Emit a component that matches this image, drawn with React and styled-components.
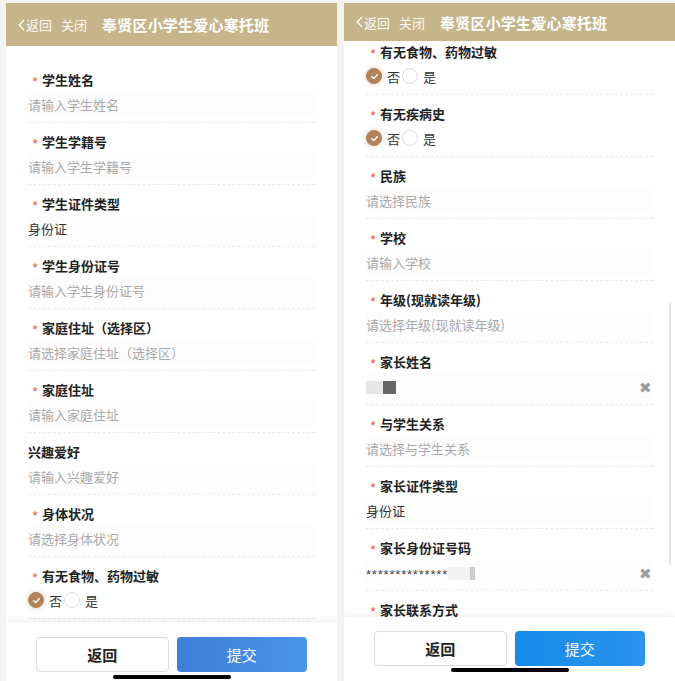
import React from 'react';
import styled, { createGlobalStyle } from 'styled-components';

const GlobalStyle = createGlobalStyle`
    html, body {
        margin: 0;
        padding: 0;
        background: #f3f3f3;
        font-family: "Noto Sans CJK SC", "Noto Sans", sans-serif;
    }
`

const Page = styled.div`
    display: flex;
    gap: 7px;
    padding: 3px 0 0 6px;
    width: 675px;
    height: 681px;
    box-sizing: border-box;
    overflow: hidden;
`

const Phone = styled.div`
    position: relative;
    width: 331px;
    height: 678px;
    background: #fff;
    display: flex;
    flex-direction: column;
    overflow: hidden;
    flex-shrink: 0;
`

const Header = styled.div`
    height: ${p => p.$h}px;
    flex-shrink: 0;
    background: #c6b58a;
    color: #fff;
    display: flex;
    align-items: center;
    padding-left: 12px;
    box-sizing: border-box;
`

const NavLink = styled.span`
    font-size: 13px;
    margin-right: 9px;
    display: flex;
    align-items: center;
    color: #fdfbf6;
`

const Title = styled.span`
    font-size: 15px;
    font-weight: 700;
    margin-left: 6px;
    letter-spacing: 0.2px;
`

const Body = styled.div`
    flex: 1;
    overflow: hidden;
    padding: 0 22px;
`

const List = styled.div`
    margin-top: ${p => p.$top}px;
`

const Field = styled.div`
    padding: 8px 0 5px;
    border-bottom: 1px dashed #e8e8e8;
`

const Label = styled.div`
    height: 20px;
    display: flex;
    align-items: center;
    font-size: 13px;
    font-weight: 700;
    color: #222;
`

const Star = styled.span`
    width: 14px;
    height: 20px;
    display: flex;
    align-items: center;
    justify-content: center;
    padding-top: 5px;
    box-sizing: border-box;
    color: #e8493f;
    font-family: "Liberation Sans", sans-serif;
    font-size: 13px;
    font-weight: 400;
`

const Input = styled.div`
    height: 26px;
    margin-top: 2px;
    display: flex;
    align-items: center;
    justify-content: space-between;
    font-size: 13px;
    color: ${p => (p.$filled ? '#333' : '#a9a9a9')};
    background: #fdfdfd;
`

const ClearIcon = styled.span`
    color: #9c9c9c;
    font-size: 15px;
    margin-right: 1px;
`

const Blur = styled.span`
    display: inline-block;
    width: ${p => p.$w}px;
    height: 13px;
    background: ${p => p.$c};
    vertical-align: middle;
`

const Masked = styled.span`
    font-family: "Liberation Sans", sans-serif;
    font-size: 13px;
    letter-spacing: 0.8px;
    color: #444;
    vertical-align: middle;
`

const RadioRow = styled.div`
    height: 26px;
    margin-top: 2px;
    display: flex;
    align-items: center;
    font-size: 13px;
    color: #333;
`

const Dot = styled.span`
    width: 16px;
    height: 16px;
    border-radius: 50%;
    box-sizing: border-box;
    display: flex;
    align-items: center;
    justify-content: center;
    margin-right: 5px;
    margin-left: ${p => (p.$on ? 0 : 2)}px;
    background: ${p => (p.$on ? '#b5835a' : '#fff')};
    border: 1px solid ${p => (p.$on ? '#b5835a' : '#ddd')};
    box-shadow: ${p => (p.$on ? '0 0 4px rgba(181,131,90,0.45)' : 'none')};
`

const Footer = styled.div`
    height: ${p => p.$h}px;
    flex-shrink: 0;
    padding-top: ${p => p.$pad}px;
    box-sizing: border-box;
    background: #fff;
    box-shadow: 0 -2px 6px rgba(0, 0, 0, 0.07);
    display: flex;
    flex-direction: column;
    align-items: center;
    position: relative;
`

const Buttons = styled.div`
    display: flex;
    gap: 8px;
    width: 100%;
    padding: 0 30px;
    box-sizing: border-box;
`

const Btn = styled.div`
    flex: 1;
    height: 35px;
    border-radius: 4px;
    display: flex;
    align-items: center;
    justify-content: center;
    font-size: 15px;
    box-sizing: border-box;
    ${p => p.$primary
        ? `background: ${p.$bg}; color: #fff;`
        : 'background: #fff; color: #222; font-weight: 700; border: 1px solid #ddd;'}
`

const HomeBar = styled.div`
    width: 118px;
    height: 4px;
    border-radius: 2px;
    background: #000;
    margin-top: ${p => p.$gap}px;
`

const ScrollThumb = styled.div`
    position: absolute;
    right: 4px;
    top: 300px;
    width: 2px;
    height: 262px;
    border-radius: 1px;
    background: #e3e3e3;
`

const Check = () => (
    <svg width="9" height="9" viewBox="0 0 10 10">
        <path d="M2 5.2 L4.2 7.3 L8 3" fill="none" stroke="#fff" strokeWidth="1.6" strokeLinecap="round" strokeLinejoin="round" />
    </svg>
)

const Chevron = () => (
    <svg width="7" height="12" viewBox="0 0 7 12" style={{ marginRight: 1 }}>
        <path d="M6 1 L1.2 6 L6 11" fill="none" stroke="#fff" strokeWidth="1.2" />
    </svg>
)

const leftFields = [
    { label: '学生姓名', text: '请输入学生姓名' },
    { label: '学生学籍号', text: '请输入学生学籍号' },
    { label: '学生证件类型', text: '身份证', filled: true },
    { label: '学生身份证号', text: '请输入学生身份证号' },
    { label: '家庭住址（选择区）', text: '请选择家庭住址（选择区）' },
    { label: '家庭住址', text: '请输入家庭住址' },
    { label: '兴趣爱好', text: '请输入兴趣爱好', optional: true },
    { label: '身体状况', text: '请选择身体状况' },
    { label: '有无食物、药物过敏', radio: true },
]

const rightFields = [
    { label: '有无食物、药物过敏', radio: true },
    { label: '有无疾病史', radio: true },
    { label: '民族', text: '请选择民族' },
    { label: '学校', text: '请输入学校' },
    { label: '年级(现就读年级)', text: '请选择年级(现就读年级)' },
    { label: '家长姓名', kind: 'name' },
    { label: '与学生关系', text: '请选择与学生关系' },
    { label: '家长证件类型', text: '身份证', filled: true },
    { label: '家长身份证号码', kind: 'id' },
    { label: '家长联系方式', text: '请输入家长联系方式' },
]

function FieldRow({ f }) {
    let control;
    if (f.radio) {
        control = (
            <RadioRow>
                <Dot $on><Check /></Dot>否
                <Dot />是
            </RadioRow>
        );
    } else if (f.kind === 'name') {
        control = (
            <Input $filled>
                <span><Blur $w={17} $c="#e6e6e6" /><Blur $w={13} $c="#666" /></span>
                <ClearIcon>✖</ClearIcon>
            </Input>
        );
    } else if (f.kind === 'id') {
        control = (
            <Input $filled>
                <span><Masked>**************</Masked><Blur $w={22} $c="#f2f2f2" /><Blur $w={5} $c="#ccc" /></span>
                <ClearIcon>✖</ClearIcon>
            </Input>
        );
    } else {
        control = <Input $filled={f.filled}>{f.text}</Input>;
    }
    return (
        <Field>
            <Label>{!f.optional && <Star>*</Star>}{f.label}</Label>
            {control}
        </Field>
    );
}

function Screen({ fields, headerH, listTop, footerH, footerPad, barGap, submitBg, scroll }) {
    return (
        <Phone>
            <Header $h={headerH}>
                <NavLink><Chevron />返回</NavLink>
                <NavLink>关闭</NavLink>
                <Title>奉贤区小学生爱心寒托班</Title>
            </Header>
            <Body>
                <List $top={listTop}>
                    {fields.map((f) => <FieldRow key={f.label} f={f} />)}
                </List>
            </Body>
            <Footer $h={footerH} $pad={footerPad}>
                <Buttons>
                    <Btn>返回</Btn>
                    <Btn $primary $bg={submitBg}>提交</Btn>
                </Buttons>
                <HomeBar $gap={barGap} />
            </Footer>
            {scroll && <ScrollThumb />}
        </Phone>
    );
}

export default function App() {
    return (
        <>
            <GlobalStyle />
            <Page>
                <Screen
                    fields={leftFields}
                    headerH={43}
                    listTop={15}
                    footerH={59}
                    footerPad={15}
                    barGap={3}
                    submitBg="linear-gradient(90deg, #3e7fd8, #4a93ec)"
                />
                <Screen
                    fields={rightFields}
                    headerH={38}
                    listTop={-8}
                    footerH={64}
                    footerPad={14}
                    barGap={2}
                    submitBg="linear-gradient(90deg, #178be9, #2a93ee)"
                    scroll
                />
            </Page>
        </>
    );
}
